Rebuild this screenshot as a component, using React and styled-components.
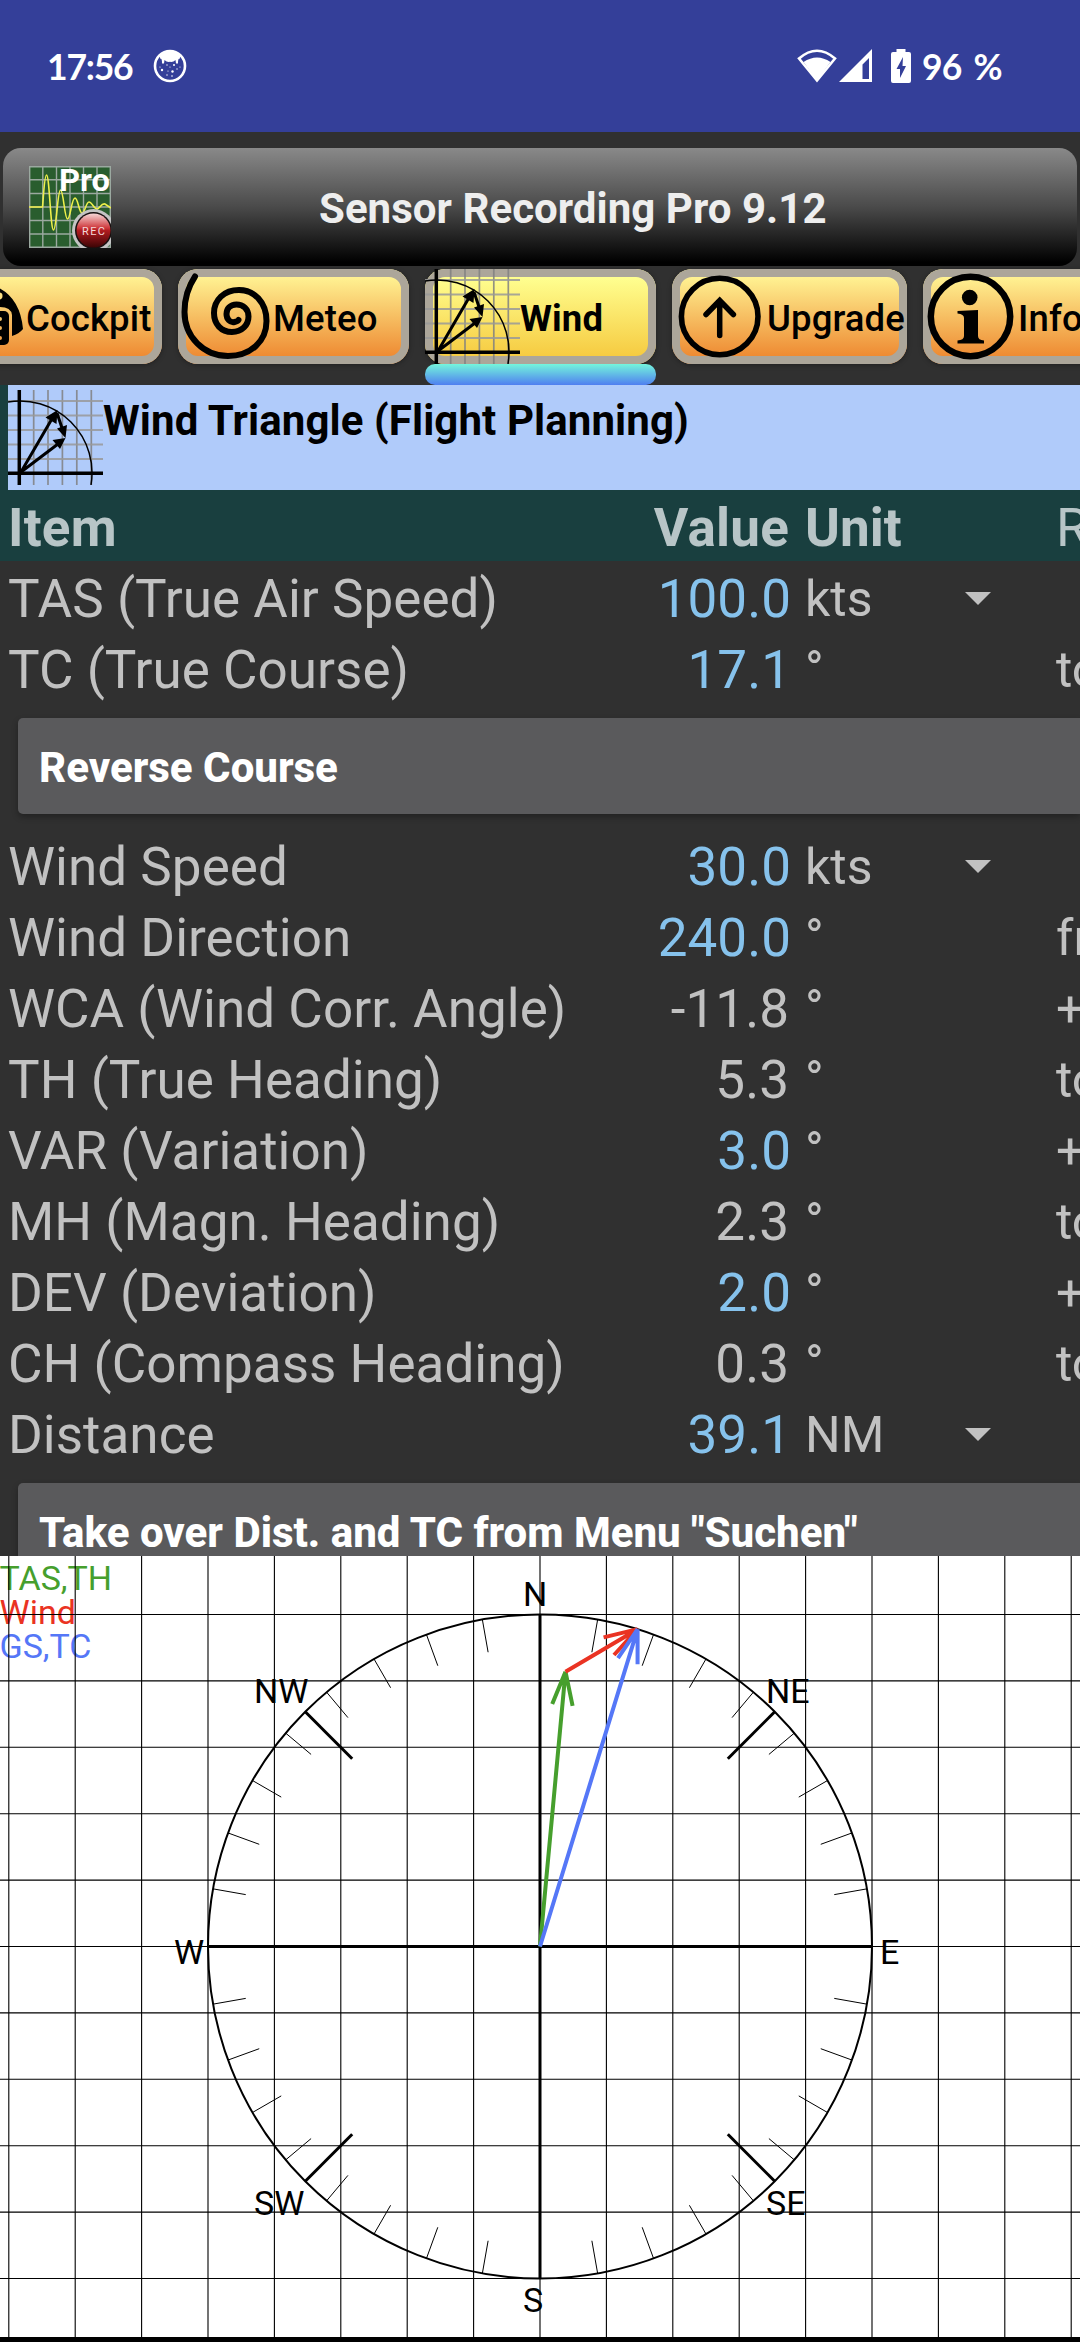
import styled, { createGlobalStyle } from 'styled-components';

const GlobalStyle = createGlobalStyle`
    body{
        margin: 0;
        background: #303030;
        font-family: Roboto, "Liberation Sans", sans-serif;
    }
    *{
        box-sizing: border-box;
    }
`;

const Screen = styled.div`
    width: 1080px;
    height: 2342px;
    overflow: hidden;
    display: flex;
    flex-direction: column;
    background: #303030;
    white-space: nowrap;
`;

const StatusBar = styled.div`
    height: 132px;
    flex: none;
    display: flex;
    align-items: center;
    justify-content: space-between;
    padding: 0 72px 0 47px;
    background: #343f99;
    color: #ffffff;
    font: 700 35.5px/44px Lato, sans-serif;
`;

const StatusGroup = styled.div`
    display: flex;
    align-items: center;
    height: 44px;
    svg{
        display: block;
        flex: none;
    }
`;

const Clock = styled.span`
    width: 106px;
    padding-top: 1px;
    letter-spacing: -1.2px;
`;

const Battery = styled.span`
    margin-left: 11px;
    padding-top: 1px;
    width: 86px;
    letter-spacing: -0.8px;
    word-spacing: 4px;
`;

const BatteryBox = styled.span`
    margin-left: 18px;
`;

const TitleBar = styled.header`
    height: 118px;
    flex: none;
    margin: 16px 3px 3px;
    padding: 0 26px;
    display: grid;
    grid-template-columns: 82px 1fr;
    align-items: center;
    border-radius: 18px;
    background: linear-gradient(#898989, #4a4a4a 50%, #000000 97%);
`;

const AppTitle = styled.h1`
    margin: 3px 0 0;
    padding-left: 208px;
    color: #eeeeee;
    font-size: 42px;
    line-height: 50px;
    font-weight: 700;
    letter-spacing: 0.04px;
`;

const TabBar = styled.nav`
    height: 116px;
    flex: none;
    display: flex;
    gap: 16px;
    margin-left: -69px;
`;

const TabCell = styled.div`
    flex: none;
    width: ${p => p.$wide ? 235 : 231}px;
`;

const Tab = styled.div`
    height: 95px;
    display: flex;
    align-items: center;
    border-radius: 20px;
    color: #000000;
    font-size: 36.5px;
    line-height: 44px;
    font-weight: ${p => p.$active ? 700 : 500};
    letter-spacing: 0.12px;
    background: ${p => p.$active
        ? 'linear-gradient(#ffff90 8px, #f6cb41 87px)'
        : 'linear-gradient(#fff292 8px, #ee8b33 87px)'};
    box-shadow: inset 0 0 0 8px #aca69a, 0 1px 5px rgba(0, 0, 0, 0.35);
    svg{
        flex: none;
    }
`;

const TabLabel = styled.span`
    padding-top: 4px;
`;

const Indicator = styled.div`
    height: 21px;
    border-radius: 10px;
    background: linear-gradient(#74f5dc, #4f7ff0);
`;

const Content = styled.main`
    height: 1171px;
    flex: none;
    overflow: hidden;
`;

const TableTop = styled.div`
    background: #193f3f;
`;

const Banner = styled.div`
    height: 105px;
    margin-left: 8px;
    padding-top: 5px;
    display: flex;
    background: #b0cbfa;
    color: #000000;
    font-size: 42px;
    line-height: 50px;
    font-weight: 700;
    letter-spacing: 0.09px;
    svg{
        flex: none;
    }
`;

const BannerTitle = styled.span`
    padding-top: 6px;
`;

const Row = styled.div`
    height: 71px;
    padding: 4px 0 0 8px;
    display: grid;
    grid-template-columns: 783px 247px 1fr;
    align-items: center;
    line-height: 66px;
    font-size: 53px;
    color: ${p => p.$head ? '#b8c5c7' : '#c1c1c1'};
`;

const ItemCell = styled.div`
    display: flex;
    justify-content: space-between;
    font-weight: ${p => p.$bold ? 700 : 400};
    letter-spacing: ${p => p.$bold ? 0.2 : 0.03}px;
`;

const Value = styled.span`
    color: ${p => p.$editable ? '#86c2ec' : 'inherit'};
    padding-right: ${p => p.$editable ? 0 : 2}px;
`;

const UnitCell = styled.div`
    display: flex;
    align-items: center;
    justify-content: space-between;
    padding: 0 47px 0 14px;
    font-size: ${p => p.$bold ? 53 : 50}px;
    font-weight: ${p => p.$bold ? 700 : 400};
`;

const Remark = styled.div`
    padding-left: 18px;
    overflow: hidden;
    font-size: ${p => p.$head ? 53 : 50}px;
`;

const WideButton = styled.div`
    height: 96px;
    margin: 15px 0 15px 18px;
    padding: 3px 0 0 21px;
    border-radius: 5px 0 0 5px;
    background: #5a5a5c;
    color: #ffffff;
    font-size: 42px;
    line-height: 93px;
    font-weight: 800;
    box-shadow: 0 3px 6px rgba(0, 0, 0, 0.3);
`;

const ChartPanel = styled.section`
    height: 786px;
    flex: none;
    background: #ffffff;
    border-bottom: 5px solid #000000;
    svg{
        display: block;
    }
    text{
        font-family: Roboto, sans-serif;
        font-size: 34px;
    }
`;

const GRID = 66.4;
const RADIUS = GRID * 5;

// degrees are compass degrees, 0 = north, clockwise
const polar = (deg, r) => {
    const a = deg * Math.PI / 180;
    return [r * Math.sin(a), -r * Math.cos(a)];
}

const MascotIcon = () => (
    <svg width="34" height="34" viewBox="0 0 34 34">
        <circle cx="17" cy="17" r="15" fill="none" stroke="#fff" strokeWidth="2.600" />
        <path d="M6.500 7 Q17 -3 27.500 7 L26.500 10 Q25 9 25 14.500 L23 14.500 L22.500 11 Q20 13.500 17 12.800 Q14 13.500 11.500 11 L11 14.500 L9 14.500 Q9 9 7.500 10Z" fill="#fff" />
        <g fill="#fff">
            <circle cx="9" cy="21" r="1.200" />
            <circle cx="19.500" cy="22.500" r="1.200" />
            <circle cx="21" cy="16" r="1" />
            <circle cx="14" cy="16" r=".7" />
            <circle cx="24" cy="20" r=".7" />
            <circle cx="15" cy="22" r=".6" />
            <circle cx="14" cy="26" r=".7" />
            <circle cx="19" cy="27" r=".8" />
            <circle cx="17" cy="18" r=".6" />
            <circle cx="27" cy="18" r=".6" />
            <circle cx="7" cy="18" r=".6" />
        </g>
    </svg>
)

const WifiIcon = () => (
    <svg width="42" height="34" viewBox="0 0 42 34">
        <path d="M2 9.500 Q20 -6 38 9.500 L20 31.500Z" fill="none" stroke="#fff" strokeWidth="2.600" />
        <path d="M6.500 13 Q20 4 33.500 13 L20 31.500Z" fill="#fff" />
    </svg>
)

const SignalIcon = () => (
    <svg width="34" height="34" viewBox="0 0 34 34">
        <path d="M33 0 V33 H0Z M30 9 L23.500 15.500 V30 H30Z" fill="#fff" fillRule="evenodd" />
    </svg>
)

const BatteryIcon = () => (
    <svg width="20" height="34" viewBox="0 0 20 34">
        <path d="M5.500 0 H14.500 V3 H18 Q20 3 20 5 V32 Q20 34 18 34 H2 Q0 34 0 32 V5 Q0 3 2 3 H5.500Z" fill="#fff" />
        <path d="M12 8 L5.500 20 H9 V29 L15 17 H11.500Z" fill="#343f99" />
    </svg>
)

const AppIcon = () => (
    <svg width="82" height="82" viewBox="0 0 82 82">
        <defs>
            <linearGradient id="rec" x1="0" y1="0" x2="0" y2="1">
                <stop offset="0" stopColor="#f6d6d6" />
                <stop offset=".42" stopColor="#cf3a3e" />
                <stop offset=".5" stopColor="#b01c20" />
                <stop offset="1" stopColor="#3c0405" />
            </linearGradient>
        </defs>
        <rect width="82" height="82" fill="#295d2e" />
        {[0.7, 13.8, 27.5, 41, 54.5, 68, 81.3].map(v => (
            <path key={v} d={`M${v} 0 V82 M0 ${v} H82`} stroke="#9ba9a0" strokeWidth="1.400" />
        ))}
        <path d="M0 41 H13.500 C14.500 30 15.500 9 17.500 9 C20.500 9 21.500 64 24.500 64 C27.500 64 28.500 24 31.500 24 C34.500 24 35.500 53 38.500 53 C41.500 53 42.500 32 46 32 C49 32 50 47 53 47 C56 47 57 36 60 36 C63 36 65 43 68 43 C71 43 72 37 76 38 L82 42" fill="none" stroke="#eef04a" strokeWidth="1.600" />
        <text x="30" y="25" fontSize="31" fontWeight="700" fill="#fff" textLength="51" lengthAdjust="spacingAndGlyphs">Pro</text>
        <circle cx="64.500" cy="64.500" r="21.500" fill="#c4c4c4" />
        <circle cx="64.500" cy="64.500" r="18.500" fill="#181010" />
        <circle cx="64.500" cy="64.500" r="17" fill="url(#rec)" />
        <text x="53" y="68.500" fontSize="11" fill="#f3dada" textLength="23">REC</text>
    </svg>
)

const CockpitIcon = () => (
    <svg width="95" height="95" viewBox="0 0 95 95">
        <path d="M12 66 L1 59 Q3 17 46 13 Q88 17 92 60 Q88 65 81 67 V46 Q80 38 69 38 H24 Q13 38 12 46Z" fill="#000" />
        <rect x="24" y="42" width="54" height="34" rx="5" fill="#000" />
        <circle cx="68" cy="27" r="3.500" fill="#f9dd83" />
        <circle cx="69" cy="50" r="2" fill="#f5c66a" />
        <circle cx="69" cy="59" r="2" fill="#f3b55c" />
        <circle cx="69" cy="69" r="2" fill="#f1a24b" />
    </svg>
)

const MeteoIcon = () => (
    <svg width="95" height="95" viewBox="0 0 95 95">
        <path d="M17 7.500 C10 18 6.500 28 6.500 43 C6.500 68 26 87 50 87 C73 87 88.500 72 88.500 52 C88.500 33 76 21 61 21 C46 21 36 31 36 44 C36 55 43 63 54 63 C64 63 70.500 56 70.500 47.500 C70.500 40 65 35.500 58.500 35.500 C52 35.500 48.500 40 48.500 45 C48.500 50 52 54 56.500 53 C59 52.500 60 52 60.500 51" fill="none" stroke="#000" strokeWidth="6" strokeLinecap="round" />
    </svg>
)

const WindIcon = () => (
    <svg width="95" height="95" viewBox="0 0 95 95">
        {[25.7, 40, 54.4, 68.8, 83.3].map(x => <path key={x} d={`M${x} 0 V95`} stroke="#808080" strokeOpacity=".85" strokeWidth="1.700" />)}
        {[11, 25.5, 40, 54.5, 69].map(y => <path key={y} d={`M0 ${y} H95`} stroke="#999" strokeOpacity=".85" strokeWidth="2" />)}
        <path d="M0 12 A72 72 0 0 1 83 95" fill="none" stroke="#000" strokeWidth="1.500" />
        <path d="M11.300 0 V95 M0 83.300 H95" stroke="#000" strokeWidth="3.500" />
        <path d="M13 82 L45 27 M13 82 L50 54 M49 23 L55 41" stroke="#000" strokeWidth="3" />
        <path d="M49.500 20 L48.500 34 L37.500 27.500Z M57.500 48 L59 35 L49 38.500Z M57.500 48 L52 59 L44.500 50Z" fill="#000" />
    </svg>
)

const UpgradeIcon = () => (
    <svg width="95" height="95" viewBox="0 0 95 95">
        <circle cx="47.700" cy="47.500" r="38.300" fill="none" stroke="#000" strokeWidth="5.600" />
        <path d="M47.700 66.500 V33 M34 45.500 L47.700 31.500 L61.400 45.500" fill="none" stroke="#000" strokeWidth="5.500" strokeLinecap="round" />
    </svg>
)

const InfoIcon = () => (
    <svg width="95" height="95" viewBox="0 0 95 95">
        <circle cx="47.500" cy="47.500" r="39.700" fill="none" stroke="#000" strokeWidth="6.500" />
        <circle cx="46.700" cy="28.500" r="7.800" fill="#000" />
        <path d="M34.500 42 L55 41 V67 Q55 71 61 71.500 V74.500 H34.500 V71.500 Q41 71 41 67 V49 Q41 45 34.500 44.500Z" fill="#000" />
    </svg>
)

const Caret = () => (
    <svg width="26" height="13" viewBox="0 0 26 13"><path d="M0 0 H26 L13 13Z" fill="#c1c1c1" /></svg>
)

const tabs = [
    { label: 'Cockpit', Icon: CockpitIcon },
    { label: 'Meteo', Icon: MeteoIcon },
    { label: 'Wind', Icon: WindIcon, active: true },
    { label: 'Upgrade', Icon: UpgradeIcon, wide: true },
    { label: 'Info', Icon: InfoIcon },
];

const courseRows = [
    { item: 'TAS (True Air Speed)', value: '100.0', unit: 'kts', editable: true, select: true },
    { item: 'TC (True Course)', value: '17.1', unit: '°', editable: true, remark: 'to' },
];

const windRows = [
    { item: 'Wind Speed', value: '30.0', unit: 'kts', editable: true, select: true },
    { item: 'Wind Direction', value: '240.0', unit: '°', editable: true, remark: 'from' },
    { item: 'WCA (Wind Corr. Angle)', value: '-11.8', unit: '°', remark: '+' },
    { item: 'TH (True Heading)', value: '5.3', unit: '°', remark: 'to' },
    { item: 'VAR (Variation)', value: '3.0', unit: '°', editable: true, remark: '+' },
    { item: 'MH (Magn. Heading)', value: '2.3', unit: '°', remark: 'to' },
    { item: 'DEV (Deviation)', value: '2.0', unit: '°', editable: true, remark: '+' },
    { item: 'CH (Compass Heading)', value: '0.3', unit: '°', remark: 'to' },
    { item: 'Distance', value: '39.1', unit: 'NM', editable: true, select: true },
];

const labels = [
    ['N', -17, -341], ['NE', 226, -243.5], ['E', 340, 17.5], ['SE', 226, 268],
    ['S', -17, 365], ['SW', -286, 268], ['W', -366, 17.5], ['NW', -286, -243.5],
];

const DataRow = ({ row }) => (
    <Row>
        <ItemCell>
            <span>{row.item}</span>
            <Value $editable={row.editable}>{row.value}</Value>
        </ItemCell>
        <UnitCell>
            <span>{row.unit}</span>
            {row.select && <Caret />}
        </UnitCell>
        <Remark>{row.remark}</Remark>
    </Row>
)

const Vector = ({ from, to, color }) => {
    const back = Math.atan2(from[1] - to[1], from[0] - to[0]);
    const wing = (d) => {
        const a = back + d * Math.PI / 180;
        return `M${to[0]} ${to[1]} L${to[0] + 35 * Math.cos(a)} ${to[1] + 35 * Math.sin(a)}`;
    }
    return <path d={`M${from[0]} ${from[1]} L${to[0]} ${to[1]} ${wing(17)} ${wing(-17)}`} stroke={color} strokeWidth="4" fill="none" />
}

const WindChart = () => {
    const lines = Array.from({ length: 17 }, (_, i) => (i - 8) * GRID);
    const ticks = Array.from({ length: 36 }, (_, i) => i * 10).filter(d => d % 90 !== 0);
    const heading = polar(5.3, 276);
    const course = polar(17.1, RADIUS);

    return (
        <svg width="1080" height="781" viewBox="-540 -390.500 1080 781">
            <text x="-540.500" y="-356.500" fill="#469f2d">TAS,TH</text>
            <text x="-540.500" y="-322.500" fill="#ea3323">Wind</text>
            <text x="-540.500" y="-289" fill="#5577f7">GS,TC</text>
            {labels.map(([t, x, y]) => <text key={t} x={x} y={y} fill="#000">{t}</text>)}
            <g stroke="#000" strokeWidth="1.100">
                {lines.map(v => <path key={v} d={`M${v} -391 V391 M-540 ${v} H540`} />)}
            </g>
            <circle r={RADIUS} fill="none" stroke="#000" strokeWidth="2" />
            <g stroke="#000" strokeWidth="1">
                {ticks.map(d => {
                    const [x1, y1] = polar(d, RADIUS);
                    const [x2, y2] = polar(d, RADIUS * 0.9);
                    return <line key={d} x1={x1} y1={y1} x2={x2} y2={y2} />
                })}
            </g>
            <g stroke="#000" strokeWidth="3">
                {[45, 135, 225, 315].map(d => {
                    const [x1, y1] = polar(d, RADIUS);
                    const [x2, y2] = polar(d, RADIUS * 0.8);
                    return <line key={d} x1={x1} y1={y1} x2={x2} y2={y2} />
                })}
                <path d={`M${-RADIUS} 0 H${RADIUS} M0 ${-RADIUS} V${RADIUS}`} />
            </g>
            <Vector from={[0, 0]} to={heading} color="#469f2d" />
            <Vector from={heading} to={course} color="#ea3323" />
            <Vector from={[0, 0]} to={course} color="#5577f7" />
        </svg>
    )
}

export default function App() {
    return <Screen>
        <GlobalStyle />
        <StatusBar>
            <StatusGroup>
                <Clock>17:56</Clock>
                <MascotIcon />
            </StatusGroup>
            <StatusGroup>
                <WifiIcon />
                <SignalIcon />
                <BatteryBox><BatteryIcon /></BatteryBox>
                <Battery>96 %</Battery>
            </StatusGroup>
        </StatusBar>
        <TitleBar>
            <AppIcon />
            <AppTitle>Sensor Recording Pro 9.12</AppTitle>
        </TitleBar>
        <TabBar>
            {tabs.map(({ label, Icon, active, wide }) => (
                <TabCell key={label} $wide={wide}>
                    <Tab $active={active}>
                        <Icon />
                        <TabLabel>{label}</TabLabel>
                    </Tab>
                    {active && <Indicator />}
                </TabCell>
            ))}
        </TabBar>
        <Content>
            <TableTop>
                <Banner>
                    <WindIcon />
                    <BannerTitle>Wind Triangle (Flight Planning)</BannerTitle>
                </Banner>
                <Row $head>
                    <ItemCell $bold>
                        <span>Item</span>
                        <Value>Value</Value>
                    </ItemCell>
                    <UnitCell $bold>Unit</UnitCell>
                    <Remark $head>Remark</Remark>
                </Row>
            </TableTop>
            {courseRows.map(row => <DataRow key={row.item} row={row} />)}
            <WideButton>Reverse Course</WideButton>
            {windRows.map(row => <DataRow key={row.item} row={row} />)}
            <WideButton>Take over Dist. and TC from Menu "Suchen"</WideButton>
        </Content>
        <ChartPanel>
            <WindChart />
        </ChartPanel>
    </Screen>
}
